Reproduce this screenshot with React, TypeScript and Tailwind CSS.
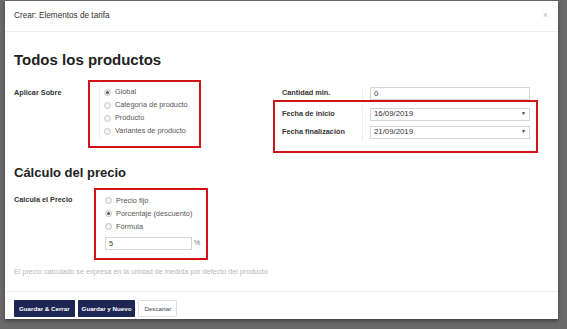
import React from "react";

function Radio({ checked, label }: { checked?: boolean; label: string }) {
  return (
    <div className="flex items-center h-[13px] gap-[4px]">
      <span className="w-[7px] h-[7px] rounded-full border border-[#c4c4c4] bg-[#f3f3f3] flex items-center justify-center">
        {checked && <span className="w-[3px] h-[3px] rounded-full bg-[#555]" />}
      </span>
      <span>{label}</span>
    </div>
  );
}

function Field({ value, arrow }: { value: string; arrow?: boolean }) {
  return (
    <div className="w-[160px] h-[13px] border border-[#d6d6d6] flex items-center justify-between px-[3px] text-[7.8px] text-[#333]">
      <span>{value}</span>
      {arrow && <span className="text-[5px] text-[#333]">▼</span>}
    </div>
  );
}

export default function App() {
  return (
    <div
      className="w-[567px] h-[329px] bg-[#6a6a6a] overflow-hidden pl-[5px] pt-[1px]"
      style={{ fontFamily: "Arial, 'Liberation Sans', sans-serif" }}
    >
      <div className="w-[553px] h-[318px] bg-white flex flex-col shadow-[0_2px_4px_rgba(0,0,0,0.4)]">
        {/* header */}
        <div className="h-[31px] border-b border-[#eeeeee] flex items-center justify-between pl-[9px] pr-[10px]">
          <span className="text-[8.2px] text-[#333]">Crear: Elementos de tarifa</span>
          <span className="text-[9px] text-[#bbb]">×</span>
        </div>

        {/* body */}
        <div className="flex-1 px-[9px] pt-[20px]">
          <h1 className="text-[15px] font-bold text-[#222] leading-none">Todos los productos</h1>

          <div className="flex mt-[13px]">
            <div className="w-[74px] pt-[8px] text-[7.3px] font-bold text-[#333]">Aplicar Sobre</div>
            <div className="w-[113px] h-[68px] border-2 border-[#d0121b] pl-[9px] pt-[4px]">
              <div className="border-l border-[#eee] pl-[4px] text-[7.3px] text-[#555] flex flex-col">
                <Radio checked label="Global" />
                <Radio label="Categoría de producto" />
                <Radio label="Producto" />
                <Radio label="Variantes de producto" />
              </div>
            </div>

            <div className="ml-[72px] pt-[7px]">
              <div className="flex items-center h-[13px]">
                <span className="w-[89px] pl-[9px] text-[7.3px] font-bold text-[#333]">Cantidad min.</span>
                <div className="border-l border-[#eee] pl-[7px]">
                  <Field value="0" />
                </div>
              </div>
              <div className="w-[265px] h-[53px] border-2 border-[#d0121b] pt-[3px]">
                <div className="flex items-center h-[18px]">
                  <span className="w-[87px] pl-[7px] text-[7.3px] font-bold text-[#333]">Fecha de inicio</span>
                  <div className="border-l border-[#eee] pl-[7px] h-[18px] flex items-center">
                    <Field value="16/09/2019" arrow />
                  </div>
                </div>
                <div className="flex items-center h-[18px]">
                  <span className="w-[87px] pl-[7px] text-[7.3px] font-bold text-[#333]">Fecha finalización</span>
                  <div className="border-l border-[#eee] pl-[7px] h-[18px] flex items-center">
                    <Field value="21/09/2019" arrow />
                  </div>
                </div>
              </div>
            </div>
          </div>

          <h2 className="text-[13px] font-bold text-[#222] leading-none mt-[13px]">Cálculo del precio</h2>

          <div className="flex mt-[9px]">
            <div className="w-[80px] pt-[7px] text-[7.3px] font-bold text-[#333]">Calcula el Precio</div>
            <div className="w-[114px] h-[72px] border-2 border-[#d0121b] pl-[9px] pt-[4px] text-[7.4px] text-[#555]">
              <Radio label="Precio fijo" />
              <Radio checked label="Porcentaje (descuento)" />
              <Radio label="Fórmula" />
              <div className="flex items-center mt-[4px] gap-[2px]">
                <div className="w-[87px] h-[13px] border border-[#d6d6d6] px-[3px] flex items-center text-[#333]">5</div>
                <span className="text-[7px] text-[#777]">%</span>
              </div>
            </div>
          </div>

          <p className="text-[7.2px] text-[#b5b5b5] leading-none mt-[8px]">
            El precio calculado se expresa en la unidad de medida por defecto del producto
          </p>
        </div>

        {/* footer */}
        <div className="h-[28px] border-t border-[#eeeeee] flex items-start gap-[3px] pl-[9px] pt-[8px]">
          <button className="h-[17px] px-[5px] bg-[#1e2654] text-white text-[6.2px] font-bold rounded-[1px]">Guardar &amp; Cerrar</button>
          <button className="h-[17px] px-[4px] bg-[#1e2654] text-white text-[6.2px] font-bold rounded-[1px]">Guardar y Nuevo</button>
          <button className="h-[17px] px-[5px] bg-white border border-[#ddd] text-[#444] text-[6.2px] rounded-[1px]">Descartar</button>
        </div>
      </div>
    </div>
  );
}
